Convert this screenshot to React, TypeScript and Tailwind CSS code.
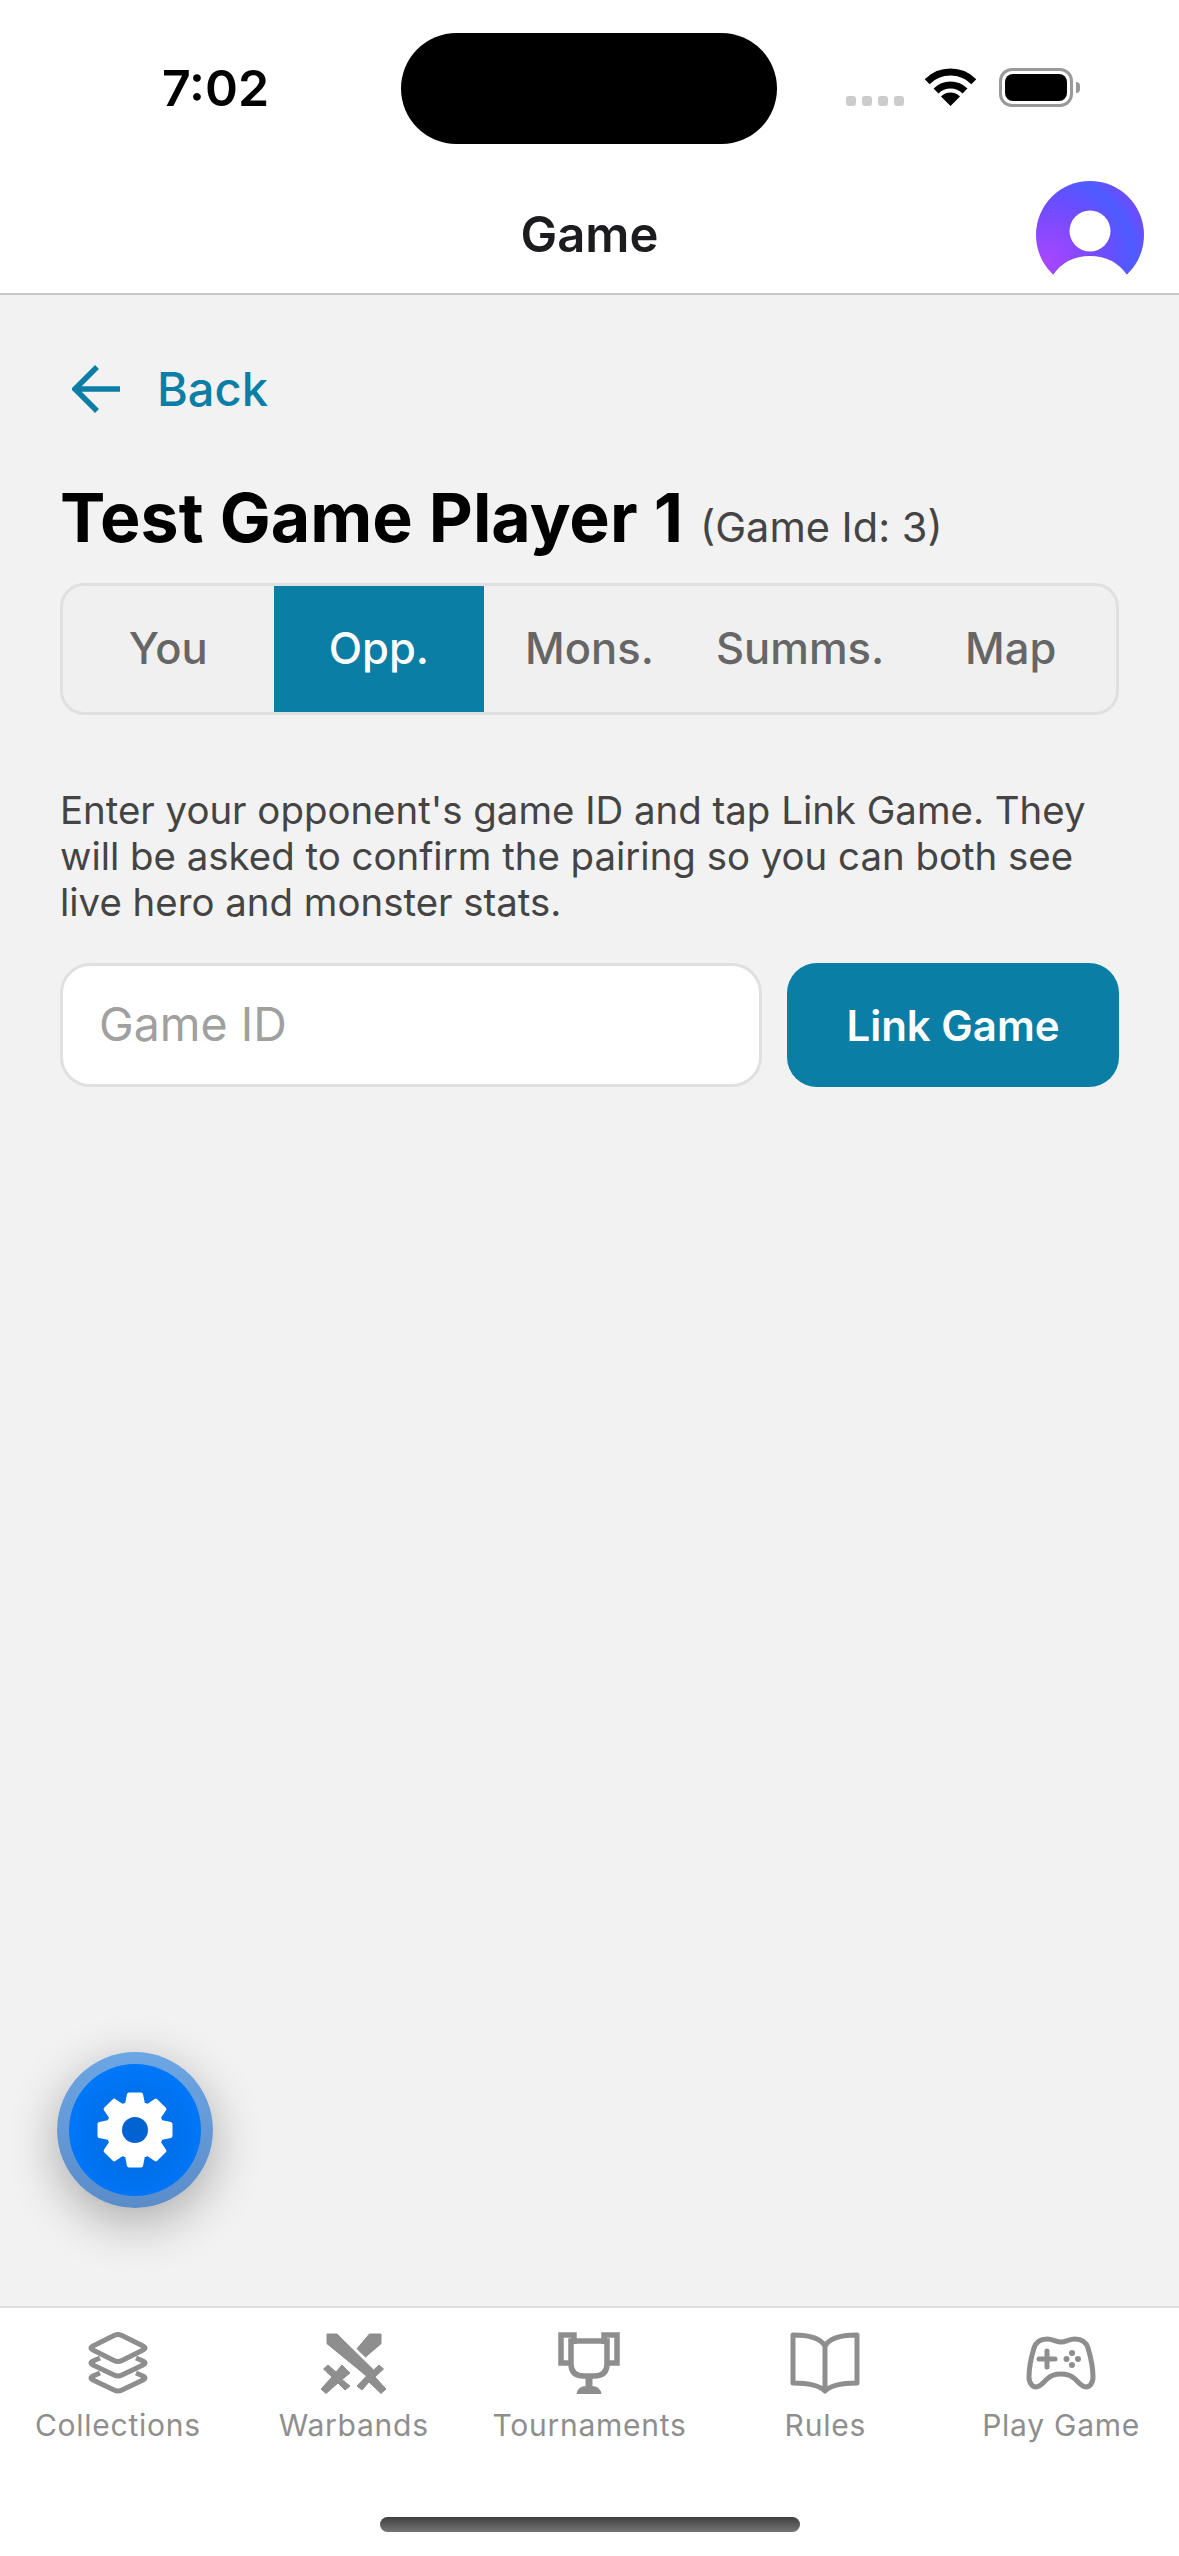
import { useMemo } from "react";

const tabs = ["You", "Opp.", "Mons.", "Summs.", "Map"];

function gearPath() {
  // eight teeth around the centre of a 78px box
  const points: string[] = [];
  const c = 39;
  for (let i = 0; i < 8; i++) {
    const a = (i * Math.PI) / 4 - Math.PI / 2;
    const at = (r: number, d: number) =>
      `${(c + r * Math.cos(a + d)).toFixed(2)} ${(c + r * Math.sin(a + d)).toFixed(2)}`;
    points.push(at(27, -0.3), at(36, -0.17), at(36, 0.17), at(27, 0.3));
  }
  return `M${points.join(" L")} Z`;
}

function GearIcon() {
  const d = useMemo(() => gearPath(), []);
  return (
    <svg width="78" height="78" viewBox="0 0 78 78" aria-hidden="true">
      <path
        fillRule="evenodd"
        fill="#fff"
        stroke="#fff"
        strokeWidth="4"
        strokeLinejoin="round"
        d={d}
      />
      <circle cx="39" cy="39" r="13" fill="#0063d1" />
    </svg>
  );
}

function StackIcon() {
  return (
    <svg width="62" height="62" viewBox="0 0 62 62" fill="none" stroke="currentColor" strokeWidth="5" aria-hidden="true">
      <path d="M27 3.5 Q31 1.5 35 3.5 L56 14 Q60 16 56 18 L35 28.5 Q31 30.5 27 28.5 L6 18 Q2 16 6 14Z" />
      <path d="M13 26 L6 29 Q2 31 6 33 L27 43 Q31 45 35 43 L56 33 Q60 31 56 29 L49 26" />
      <path d="M13 41 L6 44 Q2 46 6 48 L27 58 Q31 60 35 58 L56 48 Q60 46 56 44 L49 41" />
    </svg>
  );
}

function SwordsIcon() {
  return (
    <svg width="67" height="62" viewBox="0 0 67 62" fill="currentColor" stroke="currentColor" strokeWidth="1" strokeLinejoin="round" aria-hidden="true">
      <polygon points="7,2 17,2 53.6,38 59,33 63.5,37 55,45 66,57 61,61.5 49,50 42,58 37,54 46.5,44 7,11.7" />
      <polygon points="49.4,2 61,2 61,11.7 45.5,25 37,16.7" />
      <polygon points="22,33 30,41 22,47.5 30,54 25,58 18,51 6,61.5 1,57 12,45 3.5,37 8,33 16,40" />
    </svg>
  );
}

function TrophyIcon() {
  return (
    <svg width="62" height="62" viewBox="0 0 62 62" fill="none" stroke="currentColor" strokeWidth="6" aria-hidden="true">
      <path d="M16 12 V3 H3 V31 H13" strokeWidth="5.5" />
      <path d="M46 12 V3 H59 V31 H49" strokeWidth="5.5" />
      <path d="M13 9 H49 V32 Q49 44 36 44 H26 Q13 44 13 32 Z" strokeWidth="5.5" />
      <path d="M31 45 V56" strokeWidth="7" />
      <path d="M18.5 62 Q20 54 28 54 H34 Q42 54 43.5 62 Z" fill="currentColor" stroke="none" />
    </svg>
  );
}

function BookIcon() {
  return (
    <svg width="70" height="62" viewBox="0 0 70 62" fill="none" stroke="currentColor" strokeWidth="5" strokeLinejoin="round" aria-hidden="true">
      <path d="M35 14 C30 5 17 3 3 3 V51 C17 51 29 53 35 59 C41 53 53 51 67 51 V3 C53 3 40 5 35 14 V59" />
    </svg>
  );
}

function GamepadIcon() {
  return (
    <svg width="70" height="62" viewBox="0 0 70 62" fill="none" stroke="currentColor" strokeWidth="5" aria-hidden="true">
      <path d="M21 7 C27 7 30 10 35 10 C40 10 43 7 49 7 C56 7 60 10 62 16 C65 26 67 36 67 45 C67 52 63 55 60 55 C56 55 53 51 49 47 C45 43 41 42 35 42 C29 42 25 43 21 47 C17 51 14 55 10 55 C7 55 3 52 3 45 C3 36 5 26 8 16 C10 10 14 7 21 7Z" />
      <path d="M21 19 V35 M13 27 H29" strokeLinecap="round" />
      <g fill="currentColor" stroke="none">
        <circle cx="46" cy="21" r="3" />
        <circle cx="40.5" cy="27" r="3" />
        <circle cx="52" cy="27" r="3" />
        <circle cx="46" cy="33" r="3" />
      </g>
    </svg>
  );
}

const navItems = [
  { label: "Collections", icon: <StackIcon /> },
  { label: "Warbands", icon: <SwordsIcon /> },
  { label: "Tournaments", icon: <TrophyIcon /> },
  { label: "Rules", icon: <BookIcon /> },
  { label: "Play Game", icon: <GamepadIcon /> },
];

function StatusBar() {
  return (
    <div className="flex h-[174px] items-start">
      <div className="w-[401px] pl-[162px] pt-[58px] text-[50px] font-semibold leading-[60px] text-black">7:02</div>
      <div className="mt-[33px] h-[111px] w-[376px] rounded-full bg-black" />
      <div className="ml-[69px] mt-[68px] flex items-start">
        <div className="mt-[28px] flex gap-[6px]">
          {[0, 1, 2, 3].map((dot) => (
            <div key={dot} className="size-[10px] rounded-[3px] bg-[#cccccc]" />
          ))}
        </div>
        <svg className="ml-[21px]" width="51" height="38" viewBox="0 0 51 38" fill="none" stroke="#000" strokeWidth="7" aria-hidden="true">
          <path d="M2.2 13.7 A33 33 0 0 1 48.8 13.7" />
          <path d="M11 23 A20.5 20.5 0 0 1 40 23" />
          <path d="M25.5 38 L16 28.5 A13.4 13.4 0 0 1 35 28.5 Z" fill="#000" stroke="none" />
        </svg>
        <div className="ml-[23px] flex h-[39px] w-[74px] items-center justify-center rounded-[13px] border-[3px] border-[#999999]">
          <div className="h-[27px] w-[62px] rounded-[8px] bg-black" />
        </div>
        <div className="ml-[3px] mt-[14px] h-[11px] w-[4px] rounded-r-full bg-[#999999]" />
      </div>
    </div>
  );
}

function Avatar() {
  return (
    <svg className="absolute left-[1036px] top-[181px]" width="108" height="108" viewBox="0 0 108 108" aria-hidden="true">
      <defs>
        <radialGradient id="av" cx="10%" cy="75%" r="95%">
          <stop offset="0%" stopColor="#a846ff" />
          <stop offset="60%" stopColor="#6a4dff" />
          <stop offset="85%" stopColor="#4d5cff" />
          <stop offset="100%" stopColor="#6a4dff" />
        </radialGradient>
      </defs>
      <circle cx="54" cy="54" r="54" fill="url(#av)" />
      <circle cx="54" cy="50" r="20.5" fill="#fff" />
      <path d="M17 94 Q30 75 54 75 Q78 75 91 94 L91 108 H17 Z" fill="#fff" />
    </svg>
  );
}

export default function App() {
  return (
    <main
      className="relative flex h-[2556px] w-[1179px] flex-col overflow-hidden bg-[#f2f2f2]"
      style={{ fontFamily: "Inter, sans-serif" }}
    >
      <header className="bg-white">
        <StatusBar />
        <div className="flex h-[121px] items-start justify-center border-b-[2px] border-[#c6c6c8] pt-[31px]">
          <h2 className="text-[49px] font-semibold leading-[60px] text-[#1c1c1e]">Game</h2>
        </div>
        <Avatar />
      </header>

      <section className="flex-1 px-[60px]">
        <div className="mt-[70px] flex h-[48px] items-center text-[#0a7ea4]">
          <svg className="ml-[12px]" width="48" height="48" viewBox="0 0 48 48" fill="none" stroke="currentColor" strokeWidth="5.5" aria-hidden="true">
            <path d="M48 24 H4 M25 2 L3 24 L25 46" />
          </svg>
          <span className="ml-[37px] text-[47px] font-medium leading-[60px]">Back</span>
        </div>

        <div className="mt-[69px] flex h-[70px] items-baseline">
          <h1 className="text-[68px] font-bold leading-[70px] text-black">Test Game Player 1</h1>
          <span className="ml-[17px] text-[41.5px] leading-[50px] text-[#444444]">(Game Id: 3)</span>
        </div>

        <div className="mt-[31px] flex h-[132px] overflow-hidden rounded-[24px] border-[3px] border-[#e0e0e0] bg-[#f0f0f0]">
          {tabs.map((tab) => (
            <div
              key={tab}
              className={
                tab === "Opp."
                  ? "flex flex-1 items-center justify-center bg-[#0a7ea4] text-[43.5px] font-medium text-white"
                  : "flex flex-1 items-center justify-center text-[43.5px] font-medium text-[#666666]"
              }
            >
              {tab}
            </div>
          ))}
        </div>

        <p className="mt-[72px] text-[38.4px] leading-[46px] text-[#444444]">
          Enter your opponent's game ID and tap Link Game. They will be asked to confirm the pairing so you can both see live hero and monster stats.
        </p>

        <div className="mt-[38px] flex gap-[25px]">
          <div className="flex h-[124px] flex-1 items-center rounded-[30px] border-[3px] border-[#e0e0e0] bg-white pl-[36px] text-[46.5px] text-[#a0a0a0]">
            Game ID
          </div>
          <div className="flex h-[124px] w-[332px] items-center justify-center rounded-[30px] bg-[#0a7ea4] text-[42px] font-semibold text-white">
            Link Game
          </div>
        </div>
      </section>

      <div className="absolute left-[57px] top-[2052px] flex size-[156px] items-center justify-center rounded-full bg-[linear-gradient(#6ca6e4,#5a8cc8)] shadow-[0_14px_50px_rgba(0,0,0,0.3)]">
        <div className="flex size-[132px] items-center justify-center rounded-full bg-[radial-gradient(circle_at_50%_55%,#0068dc,#007aff_85%)]">
          <GearIcon />
        </div>
      </div>

      <footer className="relative h-[250px] border-t-[2px] border-[#dedede] bg-white pt-[24px]">
        <nav className="grid grid-cols-5">
          {navItems.map((item) => (
            <div key={item.label} className="flex flex-col items-center text-[#8e8e8f]">
              <div className="flex h-[62px] items-center justify-center">{item.icon}</div>
              <span className="mt-[13px] text-[30px] leading-[36px] tracking-[0.75px]">{item.label}</span>
            </div>
          ))}
        </nav>
        <div className="absolute bottom-[24px] left-[380px] h-[15px] w-[420px] rounded-full bg-[linear-gradient(#3f3f3f,#757575)]" />
      </footer>
    </main>
  );
}
